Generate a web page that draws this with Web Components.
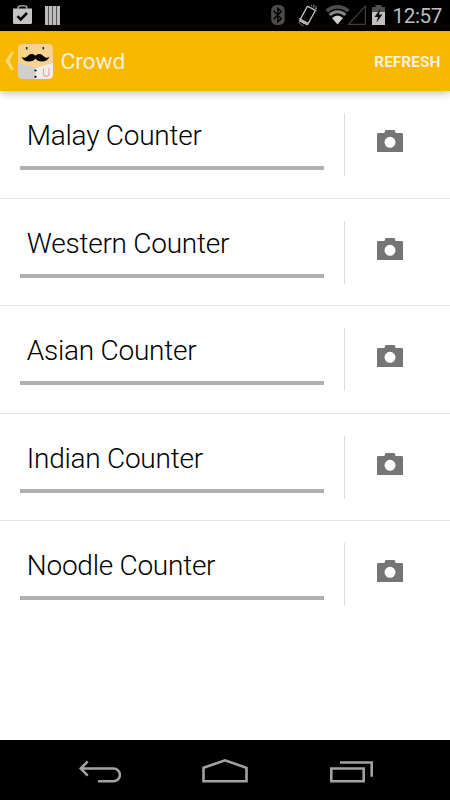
<!DOCTYPE html>
<html lang="en">
<head>
<meta charset="utf-8">
<title>Crowd</title>
<style>
html,body{margin:0;height:100%;background:#fff}
</style>
</head>
<body>
<crowd-screen></crowd-screen>
<script>
function define(name, html) {
  const t = document.createElement('template');
  t.innerHTML = html;
  customElements.define(name, class extends HTMLElement {
    constructor() {
      super();
      this.attachShadow({mode: 'open'}).appendChild(t.content.cloneNode(true));
    }
  });
}

define('status-bar', `
<style>
:host{display:flex;box-sizing:border-box;height:31px;background:#000;color:#bebebe;justify-content:space-between;font-size:20.600px;line-height:32px;letter-spacing:-.35px}
svg{display:block;flex:none}
span{white-space:nowrap;width:57.500px}
</style>
<svg width="64" height="31" viewBox="0 0 64 31">
  <path d="M13 8.500h19v14.200q0 1.300-1.300 1.300H14.300q-1.300 0-1.300-1.300z" fill="#c4c4c4"/>
  <path d="M18 9V8q0-2.200 2.200-2.200h4.600Q27 5.800 27 8v1" fill="none" stroke="#b4b4b4" stroke-width="1.300"/>
  <path d="M17.500 16.200l3.200 3.200 6.300-6.400" fill="none" stroke="#000" stroke-width="2.500"/>
  <path d="M45 6h15v19H45z" fill="#bcbcbc"/>
  <path d="M48.500 6v19M52.500 6v19M56.500 6v19" stroke="#555" stroke-width="1"/>
</svg>
<svg width="115" height="31" viewBox="270 0 115 31" style="margin-left:auto;margin-right:7.500px">
  <rect x="271.200" y="5" width="13.500" height="20" rx="5.500" fill="#4b4b4b"/>
  <path d="M273.600 10.800l7.600 8-3.400 3.200V8.300l3.400 3.300-7.600 7.700" fill="none" stroke="#000" stroke-width="1.400"/>
  <g transform="rotate(28 307.500 15.500)" fill="none">
    <rect x="303" y="7.300" width="9" height="16.500" rx="1" stroke="#c4c4c4" stroke-width="1.300"/>
    <path d="M303.500 22.500h8" stroke="#c4c4c4" stroke-width="1.800"/>
  </g>
  <path d="M311 5.500l4.500 2.500-1 4M299.500 18l-.5 5 4.500 3M313.500 5l3 2-.7 4.500M302 19.500l-.5 2.700 2.500 1.500" fill="none" stroke="#a8a8a8" stroke-width="1" stroke-dasharray="1.500 .7"/>
  <path d="M326.700 11.200a15.800 15.800 0 0 1 21.600 0" fill="none" stroke="#4c4c4c" stroke-width="3.800"/>
  <path d="M329.700 15a11.200 11.200 0 0 1 15.600 0" fill="none" stroke="#858585" stroke-width="3"/>
  <path d="M332 18q5.500-5 11 0L337.500 24.500z" fill="#d0d0d0"/>
  <path d="M348.500 24.400L365.400 6v18.400z" fill="none" stroke="#3e3e3e" stroke-width="1.200"/>
  <path d="M375.500 5h6v2h3.500v5h-13V7h3.500z" fill="#505050"/>
  <path d="M372 12h13v13h-13z" fill="#c0c0c0"/>
  <path d="M380.500 8.500l-6 8.500h3.500l-1.500 5.500 6-8H379z" fill="#111"/>
</svg>
<span>12:57</span>`);

define('action-bar', `
<style>
:host{display:flex;box-sizing:border-box;height:60px;background:#f9b800;align-items:center;color:#f6efdb;border-top:1px solid #f2b203;border-bottom:1px solid #fbb300;box-shadow:0 2px 8px rgba(0,0,0,.28);position:relative;z-index:1}
svg{display:block;flex:none}
.title{font-size:22.800px;margin-left:7.400px;line-height:30px;letter-spacing:-.1px;padding-top:2px}
.action{font-weight:700;font-size:15.500px;margin:1px 9.500px 0 auto}
</style>
<svg width="53" height="58" viewBox="0 32 53 58">
  <path d="M11.300 52h2.700L9.700 61l4.300 9h-2.700L5.300 61z" fill="#fcd978"/>
  <clipPath id="app"><rect x="18" y="44" width="35" height="35" rx="4.500"/></clipPath>
  <g clip-path="url(#app)">
    <path d="M18 44h35v35H18z" fill="#f5d38f"/>
    <path d="M18 63l17.500 5v11H18z" fill="#cfcfcf"/>
    <path d="M35.500 68L53 63v16H35.500z" fill="#ededed"/>
  </g>
  <path d="M26.700 47v2.500M43.300 47v2.500" stroke="#222" stroke-width="1.500"/>
  <path d="M35.500 55.800c-2-2.200-5.500-2.300-7.500 0-1.700 2-4 2.500-6.500.9 1.500 3.500 4.300 4.700 7.500 4.700 3 0 5.400-1 6.500-3 1.100 2 3.500 3 6.500 3 3.200 0 6-1.200 7.500-4.700-2.500 1.600-4.800 1.100-6.500-.9-2-2.300-5.500-2.200-7.500 0z" fill="#050505"/>
  <circle cx="35.500" cy="70.500" r="1.100"/><circle cx="35.500" cy="76.800" r="1.100"/>
  <path d="M43.500 68.300v5.200q0 3 2.700 3t2.700-3v-5.200" fill="none" stroke="#f2a09a" stroke-width="1.100"/>
</svg>
<span class="title"><slot name="title"></slot></span>
<span class="action"><slot name="action"></slot></span>`);

define('counter-row', `
<style>
:host{display:flex;box-sizing:border-box;height:107.500px;padding:22px 0 22.500px 20px;border-bottom:1px solid #e4e4e4}
:host(:last-of-type){border-bottom-color:transparent}
.main{width:304px;box-sizing:border-box;height:57px;border-bottom:4px solid #b0b0b0;padding-left:6.800px;font-size:28px;font-weight:300;letter-spacing:-.25px;line-height:46px;white-space:nowrap;color:#000}
.rule{width:1px;height:63px;background:#dcdcdc;margin-left:20px}
svg{display:block;margin:17px 0 0 32px}
</style>
<div class="main"><slot></slot></div>
<div class="rule"></div>
<svg width="26" height="22" viewBox="0 0 26 22"><path fill="#757575" fill-rule="evenodd" d="M8.500 0h9l1.200 3H24.800Q26 3 26 4.200V22H0V4.200Q0 3 1.200 3h6.100zM13 6.800a5.500 5.500 0 1 0 0 11 5.500 5.500 0 0 0 0-11z"/></svg>`);

define('nav-bar', `
<style>
:host{display:flex;height:60px;background:#000;justify-content:center}
svg{display:block}
</style>
<svg width="450" height="60" viewBox="0 740 450 60" fill="none" stroke="#a2a2a2" stroke-width="2.600">
  <path d="M81 768.500h32.500a6.300 6.300 0 0 1 0 12.800H98M87.700 761.300l-7 7.200 7 7.200"/>
  <path d="M203.500 767.800L225 760.300l21.500 7.500v13.500h-43z"/>
  <path d="M331.300 768.500h32.400v12.800h-32.400zM340 762.500h31.700v14.300"/>
</svg>`);

define('crowd-screen', `
<style>
:host{display:flex;flex-direction:column;height:800px;width:450px;overflow:hidden;background:#fff;font-family:Roboto,sans-serif}
main{flex:1;min-height:0}
</style>
<status-bar></status-bar>
<action-bar><span slot="title">Crowd</span><span slot="action">REFRESH</span></action-bar>
<main>
<counter-row>Malay Counter</counter-row>
<counter-row>Western Counter</counter-row>
<counter-row>Asian Counter</counter-row>
<counter-row>Indian Counter</counter-row>
<counter-row>Noodle Counter</counter-row>
</main>
<nav-bar></nav-bar>`);
</script>
</body>
</html>
